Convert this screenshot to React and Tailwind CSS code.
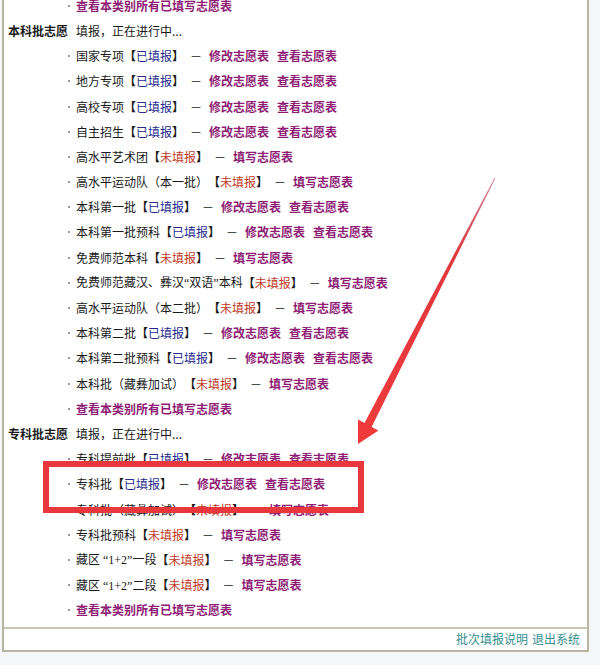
import React from 'react';

const Q = ({ children }) => (
    <span style={{ fontFamily: '"Liberation Serif", serif' }}>{children}</span>
);

const benke = [
    { name: '国家专项', done: true },
    { name: '地方专项', done: true },
    { name: '高校专项', done: true },
    { name: '自主招生', done: true },
    { name: '高水平艺术团', done: false },
    { name: '高水平运动队（本一批）', done: false },
    { name: '本科第一批', done: true },
    { name: '本科第一批预科', done: true },
    { name: '免费师范本科', done: false },
    { name: <>免费师范藏汉、彝汉<Q>“</Q>双语<Q>”</Q>本科</>, key: 'sy', done: false },
    { name: '高水平运动队（本二批）', done: false },
    { name: '本科第二批', done: true },
    { name: '本科第二批预科', done: true },
    { name: '本科批（藏彝加试）', done: false },
];

const zhuanke = [
    { name: '专科提前批', done: true },
    { name: '专科批', done: true },
    { name: '专科批（藏彝加试）', done: false },
    { name: '专科批预科', done: false },
    { name: <>藏区<Q> “1+2”</Q>一段</>, key: 'zq1', done: false },
    { name: <>藏区<Q> “1+2”</Q>二段</>, key: 'zq2', done: false },
];

const Dot = () => <span className="w-[2px] h-[2px] bg-[#9a9a9a] mr-[6px] shrink-0" />;

const LinkText = ({ children, className = '' }) => (
    <a href="#" className={`font-bold text-[#8e1c74] ${className}`}>{children}</a>
);

function Item({ name, done }) {
    return (
        <div className="flex items-center h-[25.2px] pl-[64px] whitespace-nowrap">
            <Dot />
            <span>{name}</span>
            <span className="font-bold">【</span>
            <span className={done ? 'text-[#262a8c]' : 'text-[#c0391f]'}>{done ? '已填报' : '未填报'}</span>
            <span className="font-bold">】</span>
            <span className="ml-[6px] mr-[7px]">－</span>
            {done ? (
                <>
                    <LinkText>修改志愿表</LinkText>
                    <LinkText className="ml-[8px]">查看志愿表</LinkText>
                </>
            ) : (
                <LinkText>填写志愿表</LinkText>
            )}
        </div>
    );
}

function ViewAll() {
    return (
        <div className="flex items-center h-[25.2px] pl-[64px]">
            <Dot />
            <LinkText>查看本类别所有已填写志愿表</LinkText>
        </div>
    );
}

function Heading({ title }) {
    return (
        <div className="flex items-center h-[25.2px] pl-[4px]">
            <span className="font-bold w-[60px]">{title}</span>
            <span className="ml-[8px]">填报，正在进行中...</span>
        </div>
    );
}

export default function App() {
    return (
        <div
            className="relative w-[600px] h-[665px] bg-[#f4f6f7] overflow-hidden text-[12px] text-[#1a1a1a]"
            style={{ fontFamily: '"Noto Sans CJK SC", "Noto Sans", sans-serif' }}
        >
            <div className="ml-[2px] mt-[-6.8px] w-[587px] bg-white border-l-2 border-r-2 border-b-2 border-[#b8b5a2]">
                <ViewAll />
                <Heading title="本科批志愿" />
                {benke.map(item => <Item key={item.key || item.name} {...item} />)}
                <ViewAll />
                <Heading title="专科批志愿" />
                {zhuanke.map(item => <Item key={item.key || item.name} {...item} />)}
                <ViewAll />
                <div className="h-[4px]" />
                <div className="flex items-center justify-end h-[23px] pr-[7px] border-t-2 border-[#c9c6b5] text-[#338f8f]">
                    <a href="#">批次填报说明</a>
                    <a href="#" className="ml-[4px]">退出系统</a>
                </div>
            </div>

            {/* annotation: arrow and highlight box */}
            <svg className="absolute inset-0 pointer-events-none" width="600" height="665" viewBox="0 0 600 665">
                <defs>
                    <linearGradient id="arrowFill" x1="495" y1="178" x2="368" y2="425" gradientUnits="userSpaceOnUse">
                        <stop offset="0" stopColor="#b33a5a" stopOpacity="0.6" />
                        <stop offset="0.3" stopColor="#e0383f" />
                        <stop offset="1" stopColor="#ee3a3a" />
                    </linearGradient>
                </defs>
                <polygon
                    points="495.4,178.2 371.6,426.9 378.4,430.4 358,444 358,419.6 364.5,423.1 494.6,177.8"
                    fill="url(#arrowFill)"
                />
            </svg>
            <div className="absolute left-[43px] top-[461px] w-[321px] h-[52px] border-[6px] border-[#e8373d] pointer-events-none" />
        </div>
    );
}
